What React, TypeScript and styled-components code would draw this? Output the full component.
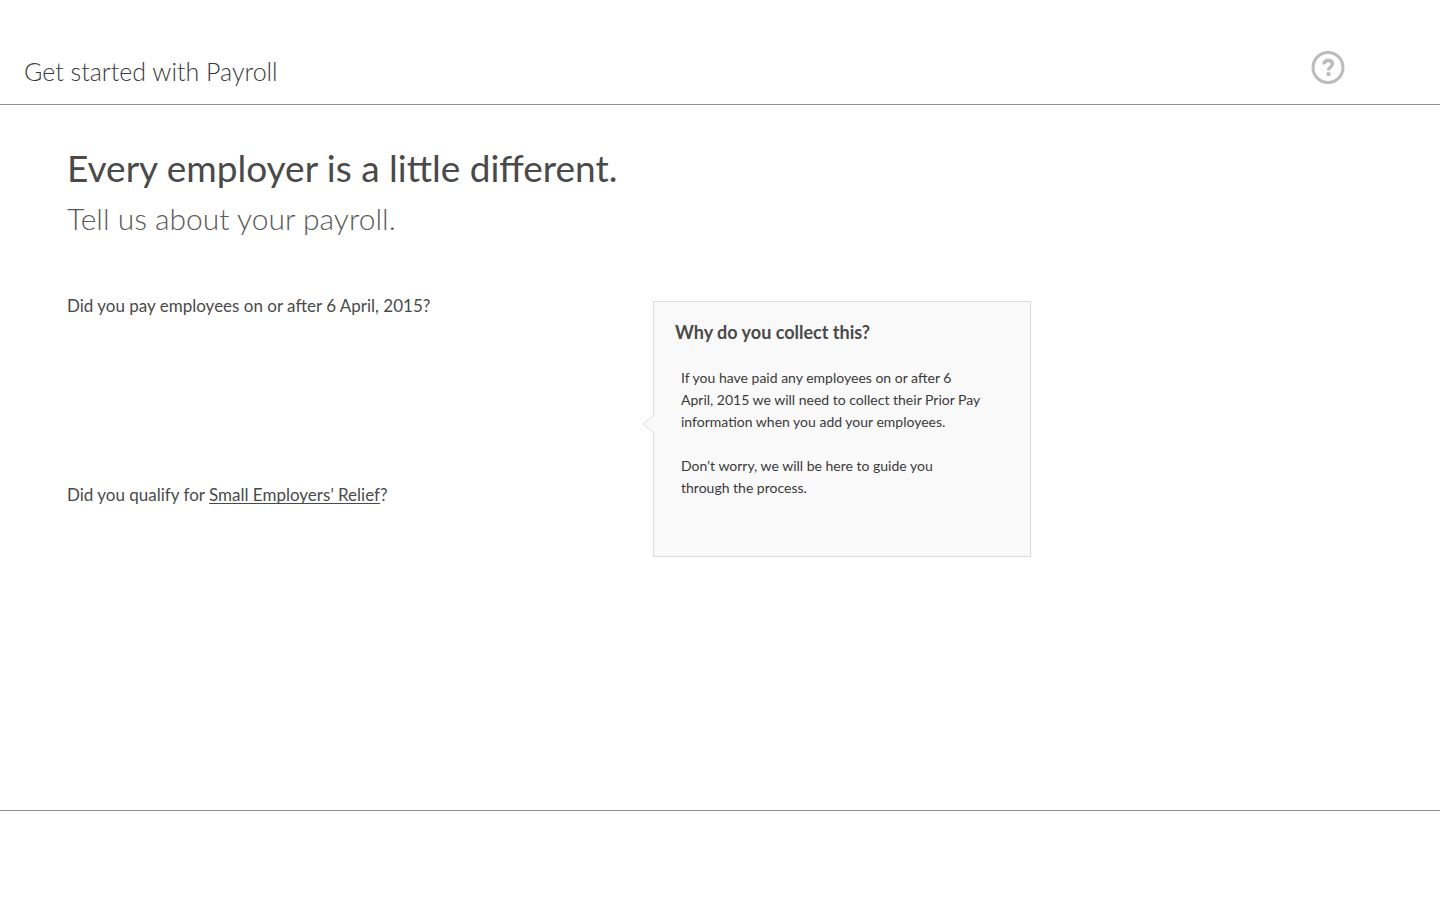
import React from "react";
import styled, { createGlobalStyle } from "styled-components";

const GlobalStyle = createGlobalStyle`
  *, *::before, *::after { box-sizing: border-box; }
  body {
    margin: 0;
    background: #fff;
    color: #4a4a4a;
    font-family: Lato, "Liberation Sans", sans-serif;
  }
  h1, h2, p { margin: 0; }
`;

const Page = styled.div`
  display: flex;
  flex-direction: column;
  min-height: 100vh;
`;

const Header = styled.header`
  display: flex;
  align-items: flex-start;
  justify-content: space-between;
  padding: 50px 94px 15px 24px;
  border-bottom: 1px solid #8f8f8f;
`;

const HeaderTitle = styled.p`
  padding-top: 3px;
  color: #3a3a3a;
  font-size: 25px;
  font-weight: 300;
  line-height: 36px;
`;

const HelpButton = styled.button`
  display: flex;
  padding: 0;
  border: 0;
  background: none;
  color: #bcbcbc;
  cursor: pointer;
`;

const Main = styled.main`
  flex: 1;
  padding: 39px 67px;
`;

const Heading = styled.h1`
  font-size: 37px;
  font-weight: 400;
  line-height: 48px;
`;

const Subheading = styled.p`
  padding-top: 4px;
  color: #5a5a5a;
  font-size: 30px;
  font-weight: 300;
  line-height: 44px;
`;

const Columns = styled.div`
  display: grid;
  grid-template-columns: minmax(0, 586px) minmax(0, 378px);
  align-items: start;
  padding-top: 54px;
`;

const Questions = styled.div`
  display: flex;
  flex-direction: column;
  gap: 165px;
`;

const Question = styled.p`
  font-size: 17px;
  line-height: 24px;
`;

const TextLink = styled.a`
  color: inherit;
  text-decoration: underline;
  text-decoration-thickness: 1px;
  text-underline-offset: 2px;
  text-decoration-skip-ink: none;
`;

const Callout = styled.aside`
  position: relative;
  margin-top: 7px;
  padding: 18px 24px 57px 21px;
  border: 1px solid #dcdcdc;
  background: #f9f9f9;
`;

const CalloutPointer = styled.svg`
  position: absolute;
  top: 113px;
  left: -12px;
`;

const CalloutTitle = styled.h2`
  font-size: 18px;
  font-weight: 700;
  line-height: 24px;
`;

const CalloutText = styled.div`
  display: flex;
  flex-direction: column;
  gap: 22px;
  padding: 23px 6px 0;
  color: #3a3a3a;
  font-size: 14px;
  line-height: 22px;
`;

const Footer = styled.footer`
  height: 90px;
  border-top: 1px solid #8f8f8f;
`;

function HelpIcon() {
  return (
    <svg width="36" height="35" viewBox="0 0 36 35" fill="none" stroke="currentColor" aria-hidden="true">
      <circle cx="18" cy="17.5" r="15" strokeWidth="3" />
      <path d="M13.9 14.5c.1-2.8 1.8-4 4.3-4 2.6 0 4.3 1.3 4.3 3.4 0 3.1-4.1 3.2-4.1 6.6" strokeWidth="3.4" />
      <path d="M16.6 22.2h3.8v3.8h-3.8z" fill="currentColor" stroke="none" />
    </svg>
  );
}

export default function App() {
  return (
    <Page>
      <GlobalStyle />
      <Header>
        <HeaderTitle>Get started with Payroll</HeaderTitle>
        <HelpButton type="button" aria-label="Help">
          <HelpIcon />
        </HelpButton>
      </Header>
      <Main>
        <Heading>Every employer is a little different.</Heading>
        <Subheading>Tell us about your payroll.</Subheading>
        <Columns>
          <Questions>
            <Question>Did you pay employees on or after 6 April, 2015?</Question>
            <Question>
              Did you qualify for <TextLink href="#relief">Small Employers’ Relief</TextLink>?
            </Question>
          </Questions>
          <Callout>
            <CalloutPointer width="13" height="18" viewBox="0 0 13 18" aria-hidden="true">
              <path d="M13 0H12L1 9L12 18H13Z" fill="#f9f9f9" />
              <path d="M12 0L1 9L12 18" fill="none" stroke="#dcdcdc" />
            </CalloutPointer>
            <CalloutTitle>Why do you collect this?</CalloutTitle>
            <CalloutText>
              <p>
                If you have paid any employees on or after 6<br />
                April, 2015 we will need to collect their Prior Pay<br />
                information when you add your employees.
              </p>
              <p>
                Don’t worry, we will be here to guide you<br />
                through the process.
              </p>
            </CalloutText>
          </Callout>
        </Columns>
      </Main>
      <Footer />
    </Page>
  );
}
